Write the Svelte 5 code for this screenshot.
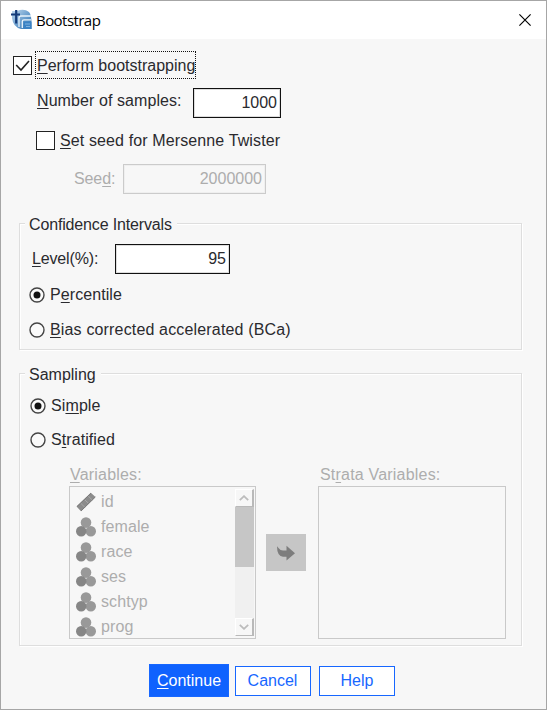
<script>
  const variables = ['female', 'race', 'ses', 'schtyp', 'prog'];
</script>

{#snippet radio(on)}
  <svg class="radio" width="16" height="16" viewBox="0 0 16 16">
    <circle cx="8" cy="8" r="7" fill="#fafafa" stroke="#444" stroke-width="1.4" />
    {#if on}<circle cx="8" cy="8" r="3.5" fill="#111" />{/if}
  </svg>
{/snippet}

<div class="dialog">
  <header>
    <svg class="logo" width="22" height="22" viewBox="0 0 22 22">
      <defs>
        <linearGradient id="lg" x1="0" y1="0" x2="1" y2="1">
          <stop offset="0" stop-color="#c3daee" />
          <stop offset=".5" stop-color="#6fa2d0" />
          <stop offset="1" stop-color="#2a6db0" />
        </linearGradient>
      </defs>
      <path d="M1 2H6Q13-1 18 3Q21 6 20.5 20H10Q2 18 1 9Z" fill="url(#lg)" />
      <path d="M8 18V9Q8 7 10 7H20M11.3 19V12.5Q11.3 10.8 13 10.8H20" fill="none" stroke="#e9f3fa" stroke-width="1.3" />
      <path d="M12.5 12.5h8V20h-8z" fill="#3b82c4" />
      <path d="M14 15h5M15 17.5h4" stroke="#7fb2e0" />
      <path d="M5.2 1V14.5M0 5.5H9" stroke="#143a78" stroke-width="2.2" />
    </svg>
    <span class="title">Bootstrap</span>
    <svg class="close" width="12" height="12" viewBox="0 0 12 12">
      <path d="M.4.4 11.6 11.6M11.6.4.4 11.6" stroke="#000" stroke-width="1.15" />
    </svg>
  </header>

  <main>
    <div class="row perform">
      <span class="check">
        <svg width="15" height="15" viewBox="0 0 15 15"><path d="M1.2 7 6 12 14 3" fill="none" stroke="#222" stroke-width="1.6" /></svg>
      </span>
      <span class="focus"><u>P</u>erform bootstrapping</span>
    </div>
    <div class="row samples">
      <span class="label"><u>N</u>umber of samples:</span>
      <span class="input">1000</span>
    </div>
    <div class="row setseed">
      <span class="check"></span>
      <span><u>S</u>et seed for Mersenne Twister</span>
    </div>
    <div class="row seed">
      <span class="label">See<u>d</u>:</span>
      <span class="input">2000000</span>
    </div>

    <section class="group intervals">
      <h2>Confidence Intervals</h2>
      <div class="row level">
        <span class="label"><u>L</u>evel(%):</span>
        <span class="input">95</span>
      </div>
      <div class="row option percentile">{@render radio(true)}<span>P<u>e</u>rcentile</span></div>
      <div class="row option bias">{@render radio(false)}<span><u>B</u>ias corrected accelerated (BCa)</span></div>
    </section>

    <section class="group sampling">
      <h2>Sampling</h2>
      <div class="row option simple">{@render radio(true)}<span>Si<u>m</u>ple</span></div>
      <div class="row option stratified">{@render radio(false)}<span>S<u>t</u>ratified</span></div>
      <div class="lists">
        <div class="source">
          <div class="caption"><u>V</u>ariables:</div>
          <div class="list">
            <div class="items">
              <div class="item">
                <svg width="20" height="20" viewBox="0 0 20 20">
                  <path d="M.5 14.5 14.8.8 19.5 5 5 19.2Z" fill="#8c8c8c" />
                  <path d="m4.5 11 4.3 4.3M8.2 7.3l4.5 4.2M12 3.8 16.3 8" stroke="#a9a9a9" />
                  <path d="M1 14.5 15 1.2M5 19 19.3 5" stroke="#7a7a7a" />
                </svg>
                <span>id</span>
              </div>
              {#each variables as name}
                <div class="item">
                  <svg width="20" height="20" viewBox="0 0 20 20">
                    <circle cx="10" cy="5.6" r="5.3" fill="#999" />
                    <circle cx="14.8" cy="14.2" r="5.2" fill="#999" />
                    <circle cx="5.2" cy="14.2" r="5.2" fill="#868686" />
                  </svg>
                  <span>{name}</span>
                </div>
              {/each}
            </div>
            <div class="scroll">
              <div class="step"><svg width="10" height="6" viewBox="0 0 10 6"><path d="M.8 5.2 5 1.2 9.2 5.2" /></svg></div>
              <div class="thumb"></div>
              <div class="track"></div>
              <div class="step"><svg width="10" height="6" viewBox="0 0 10 6"><path d="M.8.8 5 4.8 9.2.8" /></svg></div>
            </div>
          </div>
        </div>
        <div class="move">
          <svg width="18" height="16" viewBox="0 0 18 16"><path d="M0 1.2 2 3.6Q3.2 5.6 6 5.6H9.5V.8L18 8.3 9.5 15.6V11.7H6Q0 11 0 1.2Z" fill="#7d7d7d" /></svg>
        </div>
        <div class="target">
          <div class="caption">St<u>r</u>ata Variables:</div>
          <div class="list"></div>
        </div>
      </div>
    </section>

    <footer>
      <div class="button primary"><span><u>C</u>ontinue</span></div>
      <div class="button cancel">Cancel</div>
      <div class="button help">Help</div>
    </footer>
  </main>
</div>

<style>
  :global(body) { margin: 0; }
  .dialog, .dialog * { box-sizing: border-box; }
  .dialog {
    width: 547px; height: 710px; border: 1px solid #a6a6a6; background: #f7f7f7; overflow: hidden;
    font: 16px/20px "Liberation Sans", Arial, sans-serif; color: #2a2a2e; white-space: nowrap;
  }
  svg { display: block; flex: none; }
  u { text-decoration: underline; text-decoration-thickness: 1px; text-underline-offset: 2px; text-decoration-skip-ink: none; }
  header { height: 38px; background: #fff; display: flex; align-items: center; padding: 0 15px 0 10px; color: #000; }
  .title { font: 15px/20px "Open Sans", sans-serif; letter-spacing: -.55px; margin: -1px 0 0 3px; }
  .close { margin-left: auto; }
  .row { display: flex; align-items: center; }
  .check { width: 19px; height: 19px; border: 1px solid #222; background: #fff; flex: none; padding: 1px; }
  .input { display: flex; align-items: center; justify-content: flex-end; height: 30px; border: 1px solid #111; background: #fff; padding-right: 3px; box-shadow: inset 0 0 0 1px #ddd; }
  .perform { padding: 12px 0 0 12px; }
  .focus { margin-left: 3px; width: 161px; height: 28px; border: 1px dotted #111; padding: 4px 0 0 1px; }
  .samples { margin: 9px 0 0 36px; }
  .samples .label { width: 156px; margin-top: -4px; letter-spacing: .08px; }
  .samples .input { width: 88px; }
  .setseed { margin: 13px 0 0 35px; height: 19px; }
  .setseed span + span { margin-left: 5px; letter-spacing: .12px; }
  .seed { margin: 14px 0 0 73px; color: #adadad; }
  .seed .label { width: 49px; letter-spacing: -.1px; }
  .seed .input { width: 143px; border-color: #cbcbcb; background: #f7f7f7; box-shadow: inset 0 0 0 1px #efefef; }
  .group { margin-left: 18px; width: 503px; border: 1px solid #dedede; box-shadow: inset 1px 1px #fff, 1px 1px #fff; }
  h2 { font: inherit; margin: -9px 0 0 5px; height: 20px; padding: 0 5px 0 4px; width: max-content; background: #f7f7f7; }
  .intervals { height: 127px; margin-top: 29px; }
  .intervals h2 { letter-spacing: -.15px; }
  .level { padding: 9px 0 0 12px; }
  .level .label { width: 83px; letter-spacing: -.15px; }
  .level .input { width: 115px; }
  .option span { margin-left: 5px; }
  .option svg { margin-top: -1px; }
  .percentile { margin: 11px 0 0 9px; letter-spacing: .08px; }
  .bias { margin: 15px 0 0 9px; letter-spacing: .16px; }
  .sampling { height: 273px; margin-top: 23px; }
  .simple { margin: 11px 0 0 10px; letter-spacing: .1px; }
  .stratified { margin: 14px 0 0 10px; letter-spacing: .08px; }
  .lists { display: flex; align-items: flex-start; margin: 15px 0 0 49px; color: #adadad; }
  .source { width: 187px; }
  .target { width: 188px; }
  .caption { height: 21px; padding-left: 1px; letter-spacing: .2px; }
  .list { height: 153px; border: 1px solid #c9c9c9; display: flex; justify-content: space-between; overflow: hidden; padding: 2px 1px 2px 6px; }
  .item { height: 25px; display: flex; align-items: center; gap: 5px; }
  .item span { letter-spacing: .1px; }
  .scroll { width: 19px; display: flex; flex-direction: column; }
  .step { height: 18px; border: 1px solid #fff; border-right: 2px solid #b9b9b9; border-bottom: 1px solid #b9b9b9; display: flex; align-items: center; justify-content: center; }
  .step path { fill: none; stroke: #bcbcbc; stroke-width: 1.8; }
  .thumb { height: 60px; background: #c6c6c6; }
  .track { flex: 1; background: #f0f0f0; }
  .move { width: 40px; height: 37px; margin: 69px 12px 0 10px; background: #c6c6c6; display: flex; align-items: center; justify-content: center; }
  .target .caption { padding-left: 2px; }
  footer { display: flex; align-items: center; margin: 18px 0 0 148px; height: 33px; }
  .button { height: 30px; width: 76px; border: 1px solid #1767ff; background: #fff; color: #1767ff; display: flex; align-items: center; justify-content: center; }
  .cancel { margin: 0 8px 0 6px; padding-right: 1px; }
  .primary { height: 33px; width: 80px; background: #0f62fe; color: #fff; }
</style>
